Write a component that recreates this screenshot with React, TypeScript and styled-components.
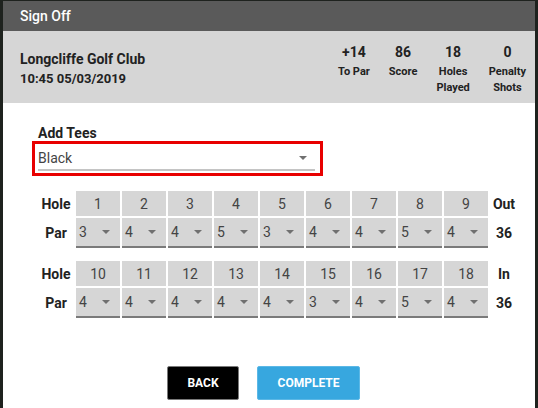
import styled, { createGlobalStyle } from 'styled-components';

const GlobalStyle = createGlobalStyle`
  html, body {
    margin: 0;
    padding: 0;
    background: #1e221e;
    font-family: Roboto, "Liberation Sans", sans-serif;
  }
`;

const Dialog = styled.div`
  width: 532px;
  height: 407px;
  margin: 1px 0 0 3px;
  background: #ffffff;
  overflow: hidden;
`;

const TitleBar = styled.div`
  height: 30px;
  padding-left: 17px;
  display: flex;
  align-items: center;
  background: #5a5a5a;
  color: #ffffff;
  font-size: 14px;
  font-weight: 500;
`;

const Header = styled.div`
  height: 72px;
  padding: 0 9px 0 17px;
  display: flex;
  justify-content: space-between;
  background: #d6d6d6;
  color: #222;
`;

const Club = styled.div`
  padding-top: 19px;
  font-weight: 700;
`;

const ClubName = styled.div`
  font-size: 14px;
  line-height: 18px;
`;

const ClubDate = styled.div`
  margin-top: 3px;
  font-size: 13px;
  line-height: 16px;
`;

const Stats = styled.div`
  display: flex;
  gap: 19px;
  padding-top: 12px;
`;

const Stat = styled.div`
  display: flex;
  flex-direction: column;
  align-items: center;
  text-align: center;
  font-weight: 700;
`;

const StatValue = styled.div`
  font-size: 14px;
  line-height: 18px;
`;

const StatLabel = styled.div`
  margin-top: 3px;
  font-size: 11px;
  line-height: 16px;
`;

const Body = styled.div`
  padding: 22px 0 0 35px;
`;

const FieldLabel = styled.div`
  font-size: 14px;
  font-weight: 700;
  line-height: 16px;
  color: #222;
`;

const Highlight = styled.div`
  width: 277px;
  margin-left: -6px;
  padding: 2px 5px 2px 3px;
  border: 3px solid #e80000;
  box-sizing: content-box;
`;

const Select = styled.div`
  height: 23px;
  display: flex;
  align-items: center;
  justify-content: space-between;
  border-bottom: 2px solid #c4c4c4;
  font-size: 14px;
  color: #444;
`;

const Caret = styled.span<{ $gap: number }>`
  width: 0;
  height: 0;
  margin-right: ${({ $gap }) => $gap}px;
  border-left: 4px solid transparent;
  border-right: 4px solid transparent;
  border-top: 4px solid #707070;
`;

const ScoreGrid = styled.div`
  margin-top: 15px;
  display: grid;
  grid-template-columns: 36px repeat(9, 44px) 28px;
  column-gap: 2px;
  row-gap: 2px;
`;

const GroupGap = styled.div`
  grid-column: 1 / -1;
  height: 9px;
`;

const RowLabel = styled.div<{ $tall?: boolean }>`
  height: ${({ $tall }) => ($tall ? 30 : 25)}px;
  display: flex;
  align-items: center;
  justify-content: center;
  font-size: 14px;
  font-weight: 700;
  color: #222;
`;

const HoleCell = styled.div`
  height: 25px;
  display: flex;
  align-items: center;
  justify-content: center;
  background: #d6d6d6;
  font-size: 14px;
  color: #444;
`;

const ParCell = styled.div`
  height: 28px;
  padding-left: 3px;
  display: flex;
  align-items: center;
  justify-content: space-between;
  background: #d6d6d6;
  border-bottom: 2px solid #7a7a7a;
  font-size: 14px;
  color: #444;
`;

const Actions = styled.div`
  margin-top: 48px;
  padding-right: 46px;
  display: flex;
  justify-content: center;
  gap: 18px;
`;

const Button = styled.button<{ $primary?: boolean }>`
  height: 34px;
  width: ${({ $primary }) => ($primary ? 103 : 72)}px;
  border: 1px solid ${({ $primary }) => ($primary ? '#5cb8e6' : '#7a7a7a')};
  border-radius: 2px;
  background: ${({ $primary }) => ($primary ? '#37a7df' : '#000000')};
  color: #ffffff;
  font-family: Roboto, "Liberation Sans", sans-serif;
  font-size: 12px;
  font-weight: 700;
  text-transform: uppercase;
  cursor: pointer;
`;

const front = [3, 4, 4, 5, 3, 4, 4, 5, 4];
const back = [4, 4, 4, 4, 4, 3, 4, 5, 4];

const stats = [
  { value: '+14', label: ['To Par'] },
  { value: '86', label: ['Score'] },
  { value: '18', label: ['Holes', 'Played'] },
  { value: '0', label: ['Penalty', 'Shots'] },
];

function Nine({ pars, start, total }: { pars: number[]; start: number; total: string }) {
  const sum = pars.reduce((a, b) => a + b, 0);
  return (
    <>
      <RowLabel>Hole</RowLabel>
      {pars.map((_, i) => (
        <HoleCell key={`h${i}`}>{start + i}</HoleCell>
      ))}
      <RowLabel>{total}</RowLabel>
      <RowLabel $tall>Par</RowLabel>
      {pars.map((p, i) => (
        <ParCell key={`p${i}`}>
          {p}
          <Caret $gap={10} />
        </ParCell>
      ))}
      <RowLabel $tall>{sum}</RowLabel>
    </>
  );
}

export default function App() {
  return (
    <>
      <GlobalStyle />
      <Dialog>
        <TitleBar>Sign Off</TitleBar>
        <Header>
          <Club>
            <ClubName>Longcliffe Golf Club</ClubName>
            <ClubDate>10:45 05/03/2019</ClubDate>
          </Club>
          <Stats>
            {stats.map((s) => (
              <Stat key={s.value + s.label[0]}>
                <StatValue>{s.value}</StatValue>
                <StatLabel>
                  {s.label.map((l) => (
                    <div key={l}>{l}</div>
                  ))}
                </StatLabel>
              </Stat>
            ))}
          </Stats>
        </Header>
        <Body>
          <FieldLabel>Add Tees</FieldLabel>
          <Highlight>
            <Select>
              Black
              <Caret $gap={8} />
            </Select>
          </Highlight>
          <ScoreGrid>
            <Nine pars={front} start={1} total="Out" />
            <GroupGap />
            <Nine pars={back} start={10} total="In" />
          </ScoreGrid>
          <Actions>
            <Button>Back</Button>
            <Button $primary>Complete</Button>
          </Actions>
        </Body>
      </Dialog>
    </>
  );
}
